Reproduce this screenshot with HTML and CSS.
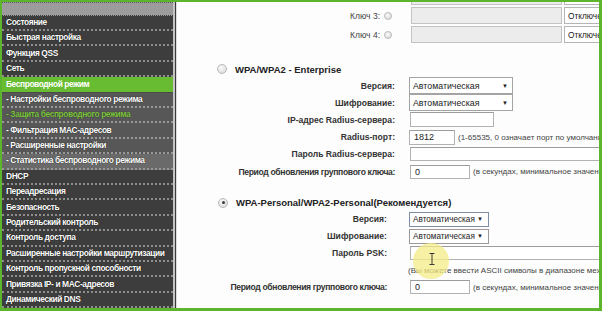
FILE: index.html
```html
<!DOCTYPE html>
<html lang="ru">
  <head>
    <meta charset="UTF-8" />
    <title>Защита беспроводного режима</title>
    <link rel="stylesheet" href="styles.css">
  </head>
  <body>
    <div class="frame">
      <nav class="sidebar">
        <div class="sidebar-top"></div>
        <div class="menu-item">Состояние</div>
        <div class="menu-item">Быстрая настройка</div>
        <div class="menu-item">Функция QSS</div>
        <div class="menu-item">Сеть</div>
        <div class="menu-item active">Беспроводной режим</div>
        <div class="menu-item sub">- Настройки беспроводного режима</div>
        <div class="menu-item sub current">- Защита беспроводного режима</div>
        <div class="menu-item sub">- Фильтрация MAC-адресов</div>
        <div class="menu-item sub">- Расширенные настройки</div>
        <div class="menu-item sub hover">- Статистика беспроводного режима</div>
        <div class="menu-item">DHCP</div>
        <div class="menu-item">Переадресация</div>
        <div class="menu-item">Безопасность</div>
        <div class="menu-item">Родительский контроль</div>
        <div class="menu-item">Контроль доступа</div>
        <div class="menu-item">Расширенные настройки маршрутизации</div>
        <div class="menu-item">Контроль пропускной способности</div>
        <div class="menu-item">Привязка IP- и MAC-адресов</div>
        <div class="menu-item">Динамический DNS</div>
      </nav>

      <main class="content">
        <div class="form">
          <div class="key-row">
            <span class="key-label">Ключ 2:</span>
            <span class="radio small"></span>
            <span class="key-input"></span>
            <span class="key-select">Отключено</span>
          </div>
          <div class="key-row">
            <span class="key-label">Ключ 3:</span>
            <span class="radio small"></span>
            <span class="key-input"></span>
            <span class="key-select">Отключено</span>
          </div>
          <div class="key-row">
            <span class="key-label">Ключ 4:</span>
            <span class="radio small"></span>
            <span class="key-input"></span>
            <span class="key-select">Отключено</span>
          </div>

          <div class="section enterprise">
            <div class="section-title">
              <span class="radio"></span>
              <span>WPA/WPA2 - Enterprise</span>
            </div>
            <div class="row">
              <span class="label">Версия:</span>
              <span class="select wide"><span>Автоматическая</span><span class="arrow">▼</span></span>
            </div>
            <div class="row">
              <span class="label">Шифрование:</span>
              <span class="select wide"><span>Автоматическая</span><span class="arrow">▼</span></span>
            </div>
            <div class="row">
              <span class="label">IP-адрес Radius-сервера:</span>
              <input class="field ip" type="text" value="">
            </div>
            <div class="row">
              <span class="label">Radius-порт:</span>
              <input class="field port" type="text" value="1812">
              <span class="hint">(1-65535, 0 означает порт по умолчанию: 1812)</span>
            </div>
            <div class="row">
              <span class="label">Пароль Radius-сервера:</span>
              <input class="field long" type="text" value="">
            </div>
            <div class="row">
              <span class="label tight">Период обновления группового ключа:</span>
              <input class="field period" type="text" value="0">
              <span class="hint">(в секундах, минимальное значение 30, 0 означает отсутствие обновления)</span>
            </div>
          </div>

          <div class="section personal">
            <div class="section-title">
              <span class="radio checked"></span>
              <span>WPA-Personal/WPA2-Personal(Рекомендуется)</span>
            </div>
            <div class="row">
              <span class="label">Версия:</span>
              <span class="select narrow focused"><span>Автоматическая</span><span class="arrow">▼</span></span>
            </div>
            <div class="row">
              <span class="label">Шифрование:</span>
              <span class="select narrow"><span>Автоматическая</span><span class="arrow">▼</span></span>
            </div>
            <div class="row">
              <span class="label">Пароль PSK:</span>
              <input class="field long" type="text" value="">
            </div>
            <div class="row">
              <span class="label"></span>
              <span class="hint note">(Вы можете ввести ASCII символы в диапазоне между 8 и 63 или шестнадцатеричные символы в диапазоне между 8 и 64.)</span>
            </div>
            <div class="row">
              <span class="label tight">Период обновления группового ключа:</span>
              <input class="field period" type="text" value="0">
              <span class="hint">(в секундах, минимальное значение 30, 0 означает отсутствие обновления)</span>
            </div>
          </div>
        </div>
      </main>

      <div class="cursor-spot">
        <svg class="ibeam" width="6" height="12" viewBox="0 0 6 12">
          <path d="M0.5 0.5h5M3 0.5v11M0.5 11.5h5" stroke="#3a3a3a" stroke-width="1" fill="none"/>
        </svg>
      </div>
    </div>
  </body>
</html>
```

FILE: styles.css
```css
* {
  margin: 0;
  padding: 0;
  box-sizing: border-box;
}

html,
body {
  width: 602px;
  height: 311px;
  overflow: hidden;
}

body {
  font-family: "Liberation Sans", Arial, sans-serif;
  background-color: #5db52e;
}

.frame {
  position: relative;
  display: flex;
  width: 602px;
  height: 311px;
  border-style: solid;
  border-color: #5db52e;
  border-width: 2px 3px 3px 2px;
  background-color: #fdfdfd;
  overflow: hidden;
}

/* left menu */

.sidebar {
  width: 173px;
  flex-shrink: 0;
  display: flex;
  flex-direction: column;
  background-color: #3c3c3c;
  border-right: 2px solid #c4c4c4;
}

.sidebar-top {
  height: 13.5px;
  flex-shrink: 0;
  background-color: #9c9c9c;
  border-top: 1px dotted #5a5a5a;
  border-bottom: 1px dotted #3a3a3a;
}

.menu-item {
  height: 15.42px;
  flex-shrink: 0;
  display: flex;
  align-items: center;
  padding-left: 4px;
  padding-bottom: 1px;
  font-size: 8.4px;
  font-weight: bold;
  letter-spacing: -0.4px;
  color: #ffffff;
  white-space: nowrap;
  overflow: hidden;
  text-shadow: 0 0 1px #000;
  background-color: #3d3d3d;
  border-bottom: 2px dotted #8e8e8e;
}

.menu-item.active {
  background-color: #68bc31;
  border-bottom: 1px solid #4a4a4a;
  text-shadow: none;
}

.menu-item.sub {
  background-color: #575757;
  border-bottom-color: #9a9a9a;
}

.menu-item.current {
  color: #7dc53f;
  text-shadow: 0 0 1px #222;
}

.menu-item.hover {
  background-color: #6a6a6a;
}

/* main form */

.content {
  flex: 1;
  min-width: 0;
  overflow: hidden;
  white-space: nowrap;
  border-left: 1px solid #3a3a3a;
  box-shadow: inset 1px 0 0 #dcdcdc;
  color: #333;
}

.form {
  margin-top: -15px;
}

.key-row {
  display: flex;
  align-items: center;
  height: 19px;
}

.key-label {
  width: 204px;
  flex-shrink: 0;
  text-align: right;
  font-size: 8.5px;
  color: #444;
}

.radio {
  width: 10px;
  height: 10px;
  flex-shrink: 0;
  border-radius: 50%;
  border: 1px solid #b9b9b9;
  background: radial-gradient(circle at 40% 35%, #fafafa, #d6d6d6);
  position: relative;
}

.radio.small {
  width: 8px;
  height: 8px;
  margin-left: 4px;
}

.radio.checked::after {
  content: "";
  position: absolute;
  left: 2.5px;
  top: 2.5px;
  width: 3px;
  height: 3px;
  border-radius: 50%;
  background-color: #3a3a3a;
}

.key-input {
  width: 151px;
  height: 17px;
  flex-shrink: 0;
  margin-left: 19px;
  background-color: #ececec;
  border: 1px solid #c3c3c3;
}

.key-select {
  width: 60px;
  height: 17px;
  flex-shrink: 0;
  margin-left: 2px;
  padding-left: 3px;
  display: flex;
  align-items: center;
  font-size: 8.3px;
  color: #222;
  background-color: #fff;
  border: 1px solid #b5b5b5;
}

.section-title {
  display: flex;
  align-items: center;
  height: 16px;
  font-size: 9.5px;
  font-weight: bold;
  color: #222;
}

.section-title .radio {
  margin-left: 41px;
  margin-right: 8px;
}

.enterprise .section-title {
  margin-top: 17px;
}

.personal .section-title {
  margin-top: 14.8px;
}

.personal .section-title .radio {
  margin-left: 42px;
}

.row {
  display: flex;
  align-items: center;
  height: 17.2px;
}

.personal .row {
  height: 17px;
}

.label {
  width: 219px;
  flex-shrink: 0;
  margin-right: 14px;
  text-align: right;
  font-size: 8.6px;
  font-weight: bold;
  color: #333;
}

.label.tight {
  letter-spacing: -0.35px;
}

.personal .label {
  width: 211px;
  margin-right: 22px;
}

.select {
  display: flex;
  align-items: center;
  justify-content: space-between;
  flex-shrink: 0;
  padding: 0 4px 0 3px;
  font-size: 8.8px;
  color: #222;
  background-color: #fff;
  border: 1px solid #a4a4a4;
}

.select.wide {
  width: 104px;
  height: 17px;
}

.select.narrow {
  width: 80px;
  height: 14.5px;
  padding-right: 5px;
  font-size: 8.2px;
  border-color: #9a9a9a;
}

.select.focused {
  border-color: #7f8fa3;
}

.arrow {
  font-size: 6px;
  color: #222;
}

.field {
  flex-shrink: 0;
  height: 15px;
  padding-left: 4px;
  font-family: "Liberation Sans", Arial, sans-serif;
  font-size: 9px;
  color: #222;
  background-color: #fff;
  border: 1px solid #b2b2b2;
  border-top-color: #9c9c9c;
  outline: none;
}

.field.ip {
  width: 84px;
  margin-left: 1px;
}

.field.port {
  width: 46px;
}

.field.long {
  width: 200px;
  margin-left: 1px;
  height: 14px;
}

.field.period {
  width: 60px;
  height: 14px;
  margin-left: 1px;
}

.hint {
  margin-left: 3px;
  font-size: 8px;
  color: #444;
}

.hint.note {
  margin-left: -1px;
}

/* mouse highlight */

.cursor-spot {
  position: absolute;
  left: 411px;
  top: 241px;
  width: 36px;
  height: 36px;
  border-radius: 50%;
  background-color: rgba(244, 236, 135, 0.75);
}

.ibeam {
  position: absolute;
  left: 16px;
  top: 10px;
}
```
